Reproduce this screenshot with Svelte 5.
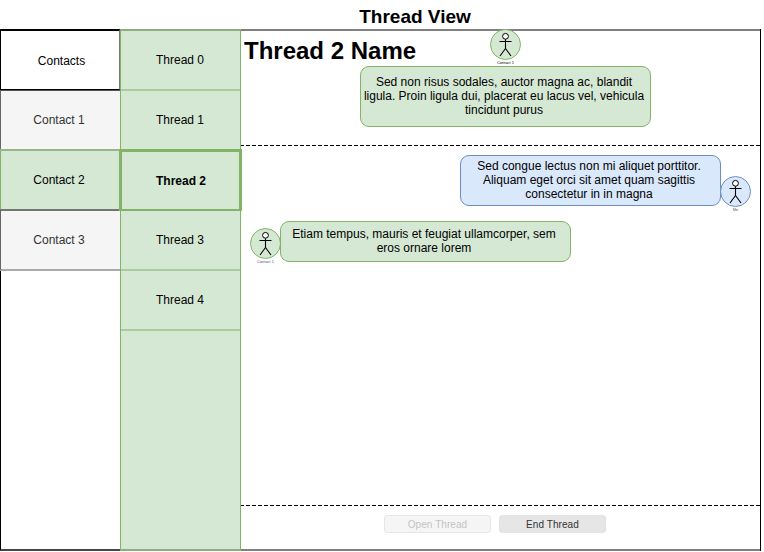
<script>
  const contacts = [
    { name: 'Contacts', kind: 'head' },
    { name: 'Contact 1', kind: 'muted' },
    { name: 'Contact 2', kind: 'active' },
    { name: 'Contact 3', kind: 'muted last' }
  ];
  const threads = ['Thread 0', 'Thread 1', 'Thread 2', 'Thread 3', 'Thread 4'];
  const selected = 2;
  const topic = [
    'Sed non risus sodales, auctor magna ac, blandit',
    'ligula. Proin ligula dui, placerat eu lacus vel, vehicula',
    'tincidunt purus'
  ];
  const mine = [
    'Sed congue lectus non mi aliquet porttitor.',
    'Aliquam eget orci sit amet quam sagittis',
    'consectetur in in magna'
  ];
  const reply = ['Etiam tempus, mauris et feugiat ullamcorper, sem', 'eros ornare lorem'];
</script>

{#snippet avatar(label, kind)}
  <div class="avatar {kind}">
    <svg width="31" height="31" viewBox="0 0 31 31">
      <circle class="disc" cx="15.5" cy="15.5" r="15" />
      <circle cx="15.5" cy="7.3" r="2.9" fill="#fff" stroke="#000" />
      <path d="M15.5 10.2V19.5M9.5 12.5H21.5M15.5 19.5L10 27M15.5 19.5L21 27" fill="none" stroke="#000" stroke-width="1.1" />
    </svg>
    <span>{label}</span>
  </div>
{/snippet}

{#snippet bubble(lines, kind)}
  <div class="bubble {kind}">
    {#each lines as line}<div>{line}</div>{/each}
  </div>
{/snippet}

<div class="page">
  <h1>Thread View</h1>
  <div class="frame">
    <nav class="contacts">
      {#each contacts as c}
        <div class="cell {c.kind}">{c.name}</div>
      {/each}
    </nav>
    <nav class="threads">
      {#each threads as t, i}
        <div class="cell" class:selected={i === selected}>{t}</div>
      {/each}
    </nav>
    <main>
      <header>
        <h2>Thread 2 Name</h2>
        {@render avatar('Contact 1', 'green strong')}
        {@render bubble(topic, 'green topic')}
      </header>
      <section>
        <div class="row right">
          {@render bubble(mine, 'blue')}
          {@render avatar('Me', 'blue')}
        </div>
        <div class="row left">
          {@render avatar('Contact 1', 'green')}
          {@render bubble(reply, 'green')}
        </div>
      </section>
      <footer>
        <button class="off" disabled>Open Thread</button>
        <button>End Thread</button>
      </footer>
    </main>
  </div>
</div>

<style>
  :global(body) {
    background: #fff;
  }
  .page {
    width: 764px;
    height: 552px;
    overflow: hidden;
    font: 12px/14px 'Liberation Sans', Arial, sans-serif;
    color: #000;
  }
  h1,
  h2 {
    margin: 0;
    font-weight: bold;
    white-space: nowrap;
  }
  h1 {
    box-sizing: border-box;
    width: 761px;
    height: 29px;
    padding: 6px 0 0 69px;
    text-align: center;
    font-size: 19px;
    line-height: 22px;
  }
  .frame {
    box-sizing: border-box;
    display: flex;
    width: 761px;
    height: 522px;
    border-right: 1px solid #000;
  }
  .contacts {
    box-sizing: border-box;
    width: 120px;
    height: 522px;
    border-left: 1px solid #000;
    border-bottom: 2px solid #474747;
  }
  .cell {
    box-sizing: border-box;
    height: 60px;
    display: flex;
    justify-content: center;
    align-items: center;
    padding: 0 1px 0 0;
  }
  .contacts .cell {
    margin-left: -1px;
    border-left: 1px solid #666;
    border-top: 2px solid #8fac7f;
    padding-right: 3px;
  }
  .contacts .head {
    height: 61px;
    border: 1px solid #000;
    border-right-color: #777;
    border-top-width: 2px;
    padding: 1px 0 0 3px;
  }
  .contacts .muted {
    background: #f5f5f5;
    color: #333;
    border-top-color: #747474;
  }
  .contacts .head + .muted {
    height: 59px;
    border-top: 1px solid #555;
    padding-bottom: 1px;
  }
  .contacts .active {
    background: #d5e8d4;
    border-left-color: #82b366;
    border-top-color: #98b587;
  }
  .contacts .last {
    height: 62px;
    border-bottom: 2px solid #aaa;
  }
  .threads {
    box-sizing: border-box;
    width: 121px;
    height: 522px;
    background: #d5e8d4;
    border: solid #82b366;
    border-width: 0 1px;
    box-shadow: inset 0 -2px #8fae80;
  }
  .threads .cell {
    border-top: 2px solid #abcb9d;
  }
  .threads .cell:first-child {
    border-top-color: #8fae80;
  }
  .threads .cell:last-child {
    height: 62px;
    border-bottom: 2px solid #abcb9d;
  }
  .threads .selected {
    height: 62px;
    margin: 0 -2px -2px;
    padding: 0 0 0 1px;
    position: relative;
    border: 3px solid #82b366;
    border-bottom-width: 2px;
    font-weight: bold;
  }
  main {
    box-sizing: border-box;
    width: 519px;
    border-top: 2px solid #808080;
    border-bottom: 2px solid #808080;
    display: flex;
    flex-direction: column;
  }
  header,
  footer {
    background: repeating-linear-gradient(90deg, #000 0 3px, #fff 3px 5px, #000 5px 6px) no-repeat;
    background-size: 100% 1px;
  }
  header {
    height: 115px;
    background-position: bottom;
    display: grid;
    grid-template-columns: 119px 291px;
    grid-template-rows: 35px 61px;
  }
  h2 {
    grid-area: 1 / 1 / 2 / 3;
    font-size: 24px;
    line-height: 28px;
    padding: 6px 0 0 3px;
  }
  header .avatar {
    grid-area: 1 / 2;
    justify-self: center;
    margin-top: -2px;
  }
  .avatar {
    width: 31px;
    height: 37px;
    text-align: center;
    font-size: 4px;
    line-height: 5px;
    color: #555;
    white-space: nowrap;
  }
  .avatar svg {
    display: block;
  }
  .avatar.strong {
    color: #000;
  }
  .disc {
    fill: #d5e8d4;
    stroke: #82b366;
  }
  .blue .disc {
    fill: #dae8fc;
    stroke: #6c8ebf;
  }
  .bubble {
    box-sizing: border-box;
    border: 1px solid #82b366;
    border-radius: 9px;
    background: #d5e8d4;
    text-align: center;
    white-space: nowrap;
    padding: 5px 3px 0 0;
    width: 291px;
    height: 41px;
  }
  .topic {
    grid-area: 2 / 2;
    height: 61px;
    padding-top: 8px;
  }
  .bubble.blue {
    width: 261px;
    height: 51px;
    padding-top: 3px;
    border-color: #6c8ebf;
    background: #dae8fc;
  }
  section {
    flex: 1;
    padding: 9px;
  }
  .row {
    display: flex;
  }
  .right {
    justify-content: flex-end;
    height: 66px;
  }
  .right .avatar {
    margin: 21px 0 0 -1px;
  }
  .left .avatar {
    margin: 7px -1px 0 0;
  }
  footer {
    height: 44px;
    box-sizing: border-box;
    padding: 10px 11px 0 0;
    display: flex;
    justify-content: center;
    gap: 8px;
  }
  button {
    box-sizing: border-box;
    width: 107px;
    height: 18px;
    padding: 1px 0 0;
    border: 1px solid #e3e3e3;
    border-radius: 3px;
    background: #e6e6e6;
    color: #333;
    font: 10px/15px 'Liberation Sans', Arial, sans-serif;
    letter-spacing: 0.07px;
  }
  .off {
    background: #f5f5f5;
    border-color: #e6e6e6;
    color: #c3c3c3;
  }
</style>
